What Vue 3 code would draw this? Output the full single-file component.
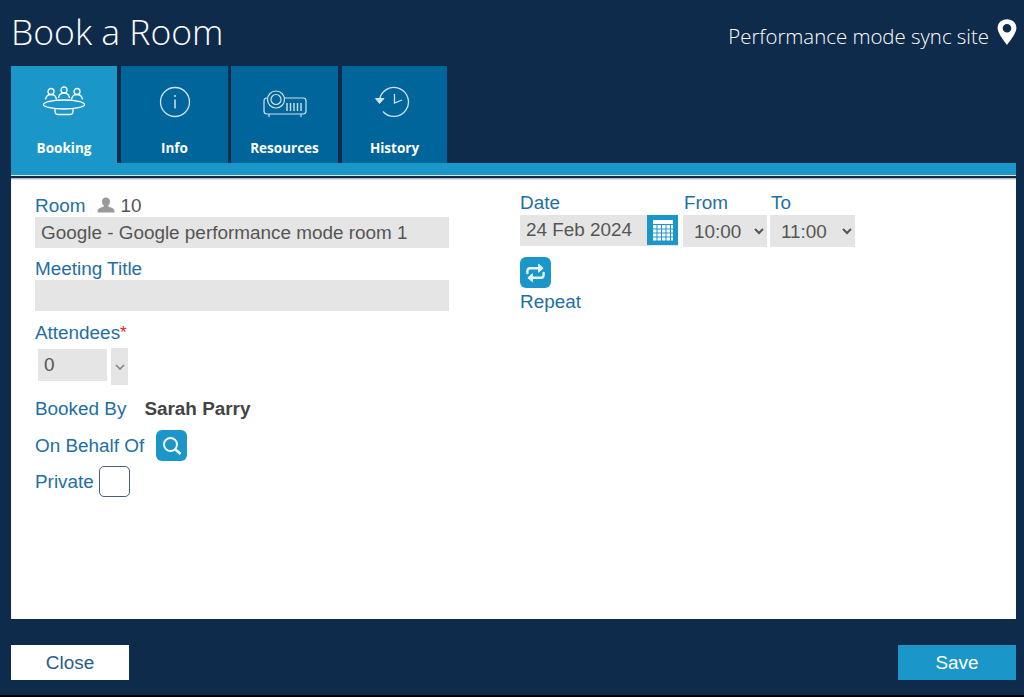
<script setup>
const tabs = [
  { id: 'booking', label: 'Booking', active: true },
  { id: 'info', label: 'Info' },
  { id: 'resources', label: 'Resources' },
  { id: 'history', label: 'History' }
]
</script>

<template>
  <div class="page">
    <header class="top">
      <h1>Book a Room</h1>
      <div class="site">
        <span>Performance mode sync site</span>
        <svg width="20" height="26" viewBox="0 0 20 26"><path fill="#fff" fill-rule="evenodd" d="M10 0.200C4.500 0.200 0.600 4 0.600 9c0 5 5.800 12 9.400 17 3.600-5 9.400-12 9.400-17C19.400 4 15.500 0.200 10 0.200zM10 5a4.300 4.300 0 1 1 0 8.600A4.300 4.300 0 0 1 10 5z"/></svg>
      </div>
    </header>

    <nav class="tabs">
      <div v-for="t in tabs" :key="t.id" class="tab" :class="[t.id, { active: t.active }]">
        <svg v-if="t.id === 'booking'" width="44" height="32" viewBox="0 0 44 32" fill="none" stroke="#fff" stroke-width="1.300">
          <circle cx="9" cy="5.500" r="3"/><path d="M3.500 13.500c.5-3.500 2.500-5 5.500-5s5 1.500 5.500 5"/>
          <circle cx="22" cy="4" r="3"/><path d="M16.500 12c.5-3.500 2.500-5 5.500-5s5 1.500 5.500 5"/>
          <circle cx="35" cy="5.500" r="3"/><path d="M29.500 13.500c.5-3.500 2.500-5 5.500-5s5 1.500 5.500 5"/>
          <ellipse cx="22" cy="18.500" rx="20.500" ry="4.500" fill="#1a96c8"/>
          <path d="M13 23v2.500c0 2 1.500 3 3.500 3h11c2 0 3.500-1 3.500-3V23"/>
        </svg>
        <svg v-else-if="t.id === 'info'" width="32" height="32" viewBox="0 0 32 32" fill="none" stroke="#cfe2ee" stroke-width="1.300">
          <circle cx="16" cy="16" r="14.500"/><path d="M16 13.500v9M16 9v2" stroke-width="1.500"/>
        </svg>
        <svg v-else-if="t.id === 'resources'" width="44" height="28" viewBox="0 0 44 28" fill="none" stroke="#cfe2ee" stroke-width="1.200">
          <path d="M10 8H4c-2 0-3 1-3 3v10c0 2 1 3 3 3h36c2 0 3-1 3-3V11c0-2-1-3-3-3H21"/>
          <circle cx="13" cy="9.500" r="8.500" fill="#00659b"/><circle cx="13" cy="9.500" r="5"/>
          <path d="M24 13v8M27.500 13v8M31 13v8M34.500 13v8M38 13v8" stroke-width="1.400"/>
          <path d="M6 24v3M38 24v3"/>
        </svg>
        <svg v-else width="36" height="32" viewBox="0 0 36 32" fill="none" stroke="#cfe2ee" stroke-width="1.300">
          <path d="M4.500 14.500A14.500 14.500 0 1 1 8 25.500"/>
          <path d="M0.500 12.500 4.500 17.500l4.500-5z" fill="#cfe2ee" stroke-width="1"/>
          <path d="M19.500 8v9l7.500-3"/>
        </svg>
        <span>{{ t.label }}</span>
      </div>
    </nav>
    <div class="strip"></div>

    <main class="panel">
      <section class="col left">
        <div class="label-row">
          <label>Room</label>
          <svg class="person" width="18" height="16" viewBox="0 0 17 16" preserveAspectRatio="none"><path fill="#9a9a9a" d="M8.500 0.500c2.400 0 3.800 1.800 3.800 4.200 0 1.700-.8 3.200-1.800 4 .2.800.7 1.100 2 1.600 2 .7 3.700 1.400 4 3.700v1.500H.500V14c.3-2.300 2-3 4-3.700 1.300-.5 1.800-.8 2-1.600-1-.8-1.800-2.300-1.800-4C4.700 2.300 6.100.500 8.500.500z"/></svg>
          <span class="cap">10</span>
        </div>
        <div class="field">Google - Google performance mode room 1</div>
        <label class="gap-title">Meeting Title</label>
        <div class="field"></div>
        <label class="gap-att">Attendees<i>*</i></label>
        <div class="attendees">
          <div class="att-input">0</div>
          <div class="att-spin">
            <svg width="10" height="6" viewBox="0 0 10 6" fill="none" stroke="#888" stroke-width="1.700"><path d="M1 1l4 4 4-4"/></svg>
          </div>
        </div>
        <div class="booked">
          <label>Booked By</label>
          <strong>Sarah Parry</strong>
        </div>
        <div class="behalf">
          <label>On Behalf Of</label>
          <button class="square" aria-label="Search">
            <svg width="20" height="20" viewBox="0 0 20 20" fill="none" stroke="#fff" stroke-width="2"><circle cx="8.500" cy="8.500" r="6.500"/><path d="M13.500 13.500l5 4.500" stroke-width="2.600"/></svg>
          </button>
        </div>
        <div class="private">
          <label>Private</label>
          <span class="check"></span>
        </div>
      </section>

      <section class="col right">
        <div class="when">
          <div class="date-group">
            <label>Date</label>
            <div class="date">
              <span class="date-text">24 Feb 2024</span>
              <span class="cal">
                <svg width="20" height="21" viewBox="0 0 20 21"><path fill="#fff" d="M0 0h20v4H0z"/><path fill="#fff" d="M0 5h3.500v3.500H0zM4.500 5h3.500v3.500H4.500zM9 5h3.500v3.500H9zM13.500 5H17v3.500h-3.500zM18 5h2v3.500h-2zM0 9.500h3.500v3H0zM4.500 9.500h3.500v3H4.500zM9 9.500h3.500v3H9zM13.500 9.500H17v3h-3.500zM18 9.500h2v3h-2zM0 13.500h3.500v3H0zM4.500 13.500h3.500v3H4.500zM9 13.500h3.500v3H9zM13.500 13.500H17v3h-3.500zM18 13.500h2v3h-2zM0 17.500h3.500v3H0zM4.500 17.500h3.500v3H4.500zM9 17.500h3.500v3H9zM13.500 17.500H17v3h-3.500zM18 17.500h2v3h-2z"/></svg>
              </span>
            </div>
          </div>
          <div class="time-group">
            <label>From</label>
            <select class="from"><option>10:00</option></select>
          </div>
          <div class="time-group">
            <label>To</label>
            <select class="to"><option>11:00</option></select>
          </div>
        </div>
        <button class="square repeat-btn" aria-label="Repeat">
          <svg width="21" height="22" viewBox="0 0 22 22" fill="none" stroke="#e6f4fa" stroke-width="2.500" stroke-linecap="round">
            <path d="M2.500 11V9c0-2 1-3 3-3h10"/><path d="M14.500 2l4.500 4-4.500 4z" fill="#e6f4fa" stroke-width="1"/>
            <path d="M19.500 11v2c0 2-1 3-3 3h-10"/><path d="M7.500 12l-4.500 4 4.500 4z" fill="#e6f4fa" stroke-width="1"/>
          </svg>
        </button>
        <label class="repeat-label">Repeat</label>
      </section>
    </main>

    <footer class="actions">
      <button class="btn close">Close</button>
      <button class="btn save">Save</button>
    </footer>
  </div>
</template>

<style>
html, body { margin: 0; background: #000; }
</style>

<style scoped>
.page {
  width: 1024px;
  height: 695px;
  background: #0f2b4c;
  padding: 0 8px 0 11px;
  box-sizing: border-box;
  display: flex;
  flex-direction: column;
  font-family: "Liberation Sans", Arial, sans-serif;
  font-size: 18.900px;
  overflow: hidden;
}
.top {
  height: 66px;
  display: flex;
  justify-content: space-between;
  color: #fff;
  font-family: "Open Sans", sans-serif;
  font-weight: 300;
}
h1 {
  margin: 0;
  padding: 7px 0 0;
  font-size: 35.500px;
  font-weight: 300;
  line-height: 48px;
}
.site {
  display: flex;
  align-items: flex-start;
  gap: 8px;
  font-size: 20.400px;
  padding-top: 22px;
  line-height: 28px;
  margin-right: -1px;
}
.site svg { margin-top: -3px; }
.tabs { display: flex; height: 97px; }
.tab {
  width: 107px;
  margin-right: 3px;
  background: #00659b;
  color: #fff;
  font-family: "Open Sans", sans-serif;
  font-weight: 700;
  font-size: 13.500px;
  position: relative;
  display: flex;
  flex-direction: column;
  align-items: center;
}
.tab.active { background: #1a96c8; }
.tab svg { position: absolute; }
.tab span { position: absolute; top: 72px; line-height: 20px; }
.tab.booking { width: 106px; margin-right: 4px; }
.tab.resources { margin-right: 4px; }
.tab.history { width: 105px; margin-right: 0; }
.tab.booking svg { top: 20px; }
.tab.info svg { top: 20px; left: 38px; }
.tab.resources svg { top: 24px; left: 32px; }
.tab.history svg { top: 20px; left: 33px; }
.strip {
  height: 12px;
  background: #1a96c8;
  border-bottom: 1px solid #d8e6ee;
}
.panel {
  height: 441px;
  margin-top: 2px;
  background: #fff;
  box-shadow: inset 0 2px 2px -1px #999;
  display: flex;
  padding: 15px 24px 0;
  box-sizing: border-box;
}
.col { display: flex; flex-direction: column; }
.left { width: 485px; }
.right { margin-top: -2px; }
label { color: #1f6fa3; line-height: 24px; }
.label-row { display: flex; align-items: center; height: 24px; box-sizing: border-box; padding-top: 2px; }
.person { margin-left: 12px; margin-top: -2px; }
.cap { color: #555; margin-left: 5px; }
.field {
  width: 414px;
  height: 31px;
  background: #e5e5e5;
  color: #555;
  padding-left: 6px;
  box-sizing: border-box;
  line-height: 31px;
}
.gap-title { margin-top: 9px; line-height: 23px; }
.gap-att { margin-top: 10px; line-height: 23px; }
.gap-att i { color: #e81c1c; font-style: normal; font-size: 17px; position: relative; top: -1px; }
.attendees { display: flex; gap: 4px; margin-left: 3px; align-items: flex-start; margin-top: 3px; }
.att-input {
  width: 69px;
  height: 32px;
  margin-top: 1px;
  background: #e5e5e5;
  color: #555;
  line-height: 32px;
  padding-left: 6px;
  box-sizing: border-box;
}
.att-spin {
  width: 17px;
  height: 37px;
  background: #e5e5e5;
  display: flex;
  align-items: center;
  justify-content: center;
}
.booked { display: flex; gap: 18px; align-items: center; margin-top: 12px; }
.booked strong { color: #444; font-weight: 700; }
.behalf { display: flex; gap: 12px; align-items: center; margin-top: 9px; }
.square {
  width: 31px;
  height: 31px;
  padding: 0;
  border: 0;
  background: #1a96c8;
  border-radius: 6px;
  display: flex;
  align-items: center;
  justify-content: center;
}
.private { display: flex; align-items: center; gap: 5px; margin-top: 5px; }
.check {
  width: 31px;
  height: 31px;
  border: 1.500px solid #4a6078;
  border-radius: 5px;
  box-sizing: border-box;
}
.when { display: flex; gap: 4px; }
.date-group { width: 159px; }
.date {
  display: flex;
  width: 158px;
  height: 31px;
  background: #e5e5e5;
  justify-content: space-between;
}
.date-text { color: #555; padding-left: 6px; line-height: 30px; }
.cal {
  width: 31px;
  height: 30px;
  background: #1a96c8;
  display: flex;
  align-items: center;
  justify-content: center;
}
.time-group { display: flex; flex-direction: column; }
.time-group label { padding-left: 1px; }
.time-group + .time-group { margin-left: -1px; }
select {
  height: 32px;
  border: 0;
  background: #e5e5e5;
  color: #555;
  font-family: inherit;
  font-size: 18.900px;
  padding: 0 0 0 7px;
  border-radius: 0;
}
.from { width: 84px; }
.to { width: 85px; }
.repeat-btn { margin-top: 10px; }
.repeat-label { margin-top: 2px; }
.actions {
  display: flex;
  justify-content: space-between;
  margin-top: 26px;
}
.btn {
  width: 118px;
  height: 35px;
  border: 0;
  padding: 0;
  font-family: inherit;
  font-size: 18.900px;
}
.close { background: #fff; color: #2a5a8c; }
.save { background: #1a96c8; color: #fff; }
</style>
